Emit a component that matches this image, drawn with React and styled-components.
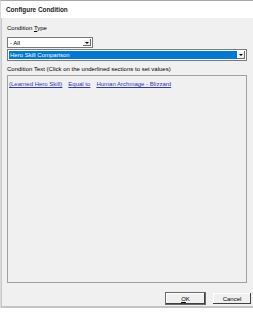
import React from "react";
import styled, { createGlobalStyle } from "styled-components";

const Global = createGlobalStyle`
  html, body { margin: 0; padding: 0; background: #ffffff; }
  body { font-family: "Liberation Sans", Arial, sans-serif; }
`;

const Window = styled.div`
  width: 253px;
  display: flex;
  flex-direction: column;
  border-top: 1px solid #a9a9a9;
  border-left: 1px solid #dadada;
  box-sizing: border-box;
`;

const TitleBar = styled.div`
  height: 17px;
  background: #ffffff;
  display: flex;
  align-items: center;
  padding-left: 5px;
  font-size: 6.4px;
  font-weight: bold;
  color: #202020;
`;

const Body = styled.div`
  background: #f0f0f0;
  border-left: 1px solid #c8c8c8;
  border-bottom: 2px solid #c4c4c4;
  height: 290px;
  box-sizing: border-box;
  display: flex;
  flex-direction: column;
`;

const Form = styled.div`
  display: flex;
  flex-direction: column;
  padding: 5px 6px 0 5px;
`;

const Label = styled.div`
  font-size: 6px;
  line-height: 10px;
  color: #000;
  margin-top: ${(p) => p.$mt || 0}px;
`;

const U = styled.span`
  text-decoration: underline;
`;

const Select = styled.div`
  width: ${(p) => p.$w};
  height: ${(p) => p.$h}px;
  box-sizing: border-box;
  border: 1px solid #7a7a7a;
  background: #ffffff;
  display: flex;
  align-items: stretch;
  margin-top: ${(p) => p.$mt || 0}px;
  padding: 1px;
`;

const SelectValue = styled.div`
  flex: 1;
  font-size: 6px;
  display: flex;
  align-items: center;
  padding-left: 1px;
  color: ${(p) => (p.$selected ? "#ffffff" : "#000000")};
  background: ${(p) => (p.$selected ? "#0078d7" : "transparent")};
`;

const ArrowButton = styled.div`
  width: 8px;
  background: #f0f0f0;
  box-shadow: inset -1px -1px #696969, inset 1px 1px #ffffff;
  display: flex;
  align-items: center;
  justify-content: center;
`;

const Triangle = styled.div`
  width: 0;
  height: 0;
  border-left: 2px solid transparent;
  border-right: 2px solid transparent;
  border-top: 2px solid #000;
`;

const TextBox = styled.div`
  margin-top: 1px;
  height: 208px;
  box-sizing: border-box;
  border: 1px solid #a0a0a0;
  background: #f0f0f0;
  padding: 3px 1px;
  display: flex;
  align-items: flex-start;
  gap: 6px;
`;

const Link = styled.span`
  font-size: 6px;
  line-height: 10px;
  color: #3333bb;
  text-decoration: underline;
`;

const Footer = styled.div`
  display: flex;
  justify-content: flex-end;
  gap: 6px;
  padding: 9px 1px 0 0;
`;

const Button = styled.div`
  width: ${(p) => p.$w}px;
  height: 13px;
  box-sizing: border-box;
  background: #f0f0f0;
  font-size: 6px;
  display: flex;
  align-items: center;
  justify-content: center;
  color: #000;
  border: 1px solid ${(p) => (p.$default ? "#6a6a6a" : "transparent")};
  box-shadow: inset -1px -1px #404040, inset 1px 1px #ffffff;
`;

export default function App() {
  return (
    <>
      <Global />
      <Window>
        <TitleBar>Configure Condition</TitleBar>
        <Body>
          <Form>
            <Label>
              Condition <U>T</U>ype
            </Label>
            <Select $w="86px" $h={11} $mt={4}>
              <SelectValue>- All</SelectValue>
              <ArrowButton>
                <Triangle />
              </ArrowButton>
            </Select>
            <Select $w="100%" $h={12} $mt={1}>
              <SelectValue $selected>Hero Skill Comparison</SelectValue>
              <ArrowButton>
                <Triangle />
              </ArrowButton>
            </Select>
            <Label $mt={3}>Condition Text (Click on the underlined sections to set values)</Label>
            <TextBox>
              <Link>(Learned Hero Skill)</Link>
              <Link>Equal to</Link>
              <Link>Human Archmage - Blizzard</Link>
            </TextBox>
          </Form>
          <Footer>
            <Button $w={41} $default>
              <span>
                <U>O</U>K
              </span>
            </Button>
            <Button $w={40}>Cancel</Button>
          </Footer>
        </Body>
      </Window>
    </>
  );
}
